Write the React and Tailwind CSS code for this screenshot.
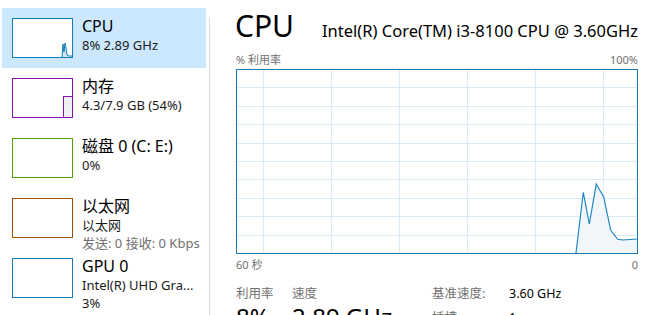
import React from "react";

const FONT = { fontFamily: '"Noto Sans", "Noto Sans CJK SC", sans-serif' };

function Thumb({ color, children }) {
  return (
    <div
      className="w-[61px] h-[40px] border shrink-0 bg-white relative overflow-hidden"
      style={{ borderColor: color }}
    >
      {children}
    </div>
  );
}

function Item({ selected, color, title, lines, thumb }) {
  return (
    <div
      className={
        "h-[60px] w-[204px] shrink-0 flex pl-[10px] pt-[10px] " +
        (selected ? "bg-[#cce8ff]" : "")
      }
    >
      <Thumb color={color}>{thumb}</Thumb>
      <div className="ml-[9px] flex flex-col -mt-[2px]">
        <div className="text-[16px] leading-[20px] text-[#000] whitespace-nowrap">{title}</div>
        {lines.map((l, i) => (
          <div
            key={i}
            className={
              "text-[13px] leading-[18px] whitespace-nowrap " +
              (l.gray ? "text-[#707070]" : "text-[#1a1a1a]")
            }
          >
            {l.text}
          </div>
        ))}
      </div>
    </div>
  );
}

function CpuThumb() {
  return (
    <svg width="59" height="38" className="absolute left-0 top-0">
      <polygon
        points="49,38 50,25 51,33 52,24 53,29 54,36 56,37 59,37 59,38"
        fill="#d6e6f2"
      />
      <polyline
        points="49,38 50,25 51,33 52,24 53,29 54,36 56,37 59,37"
        fill="none"
        stroke="#117dbb"
        strokeWidth="1"
      />
    </svg>
  );
}

function MemThumb() {
  return (
    <div className="absolute right-0 bottom-0 w-[9px] h-[21px] bg-[#f1eef3] border-l border-t border-[#8b12ae]" />
  );
}

function Chart() {
  const W = 402;
  const H = 185;
  const vx = [27, 95, 163, 231, 299, 367];
  const hy = [];
  for (let k = 1; k < 10; k++) hy.push(Math.round(k * 18.4) + 0.5);
  const pts = [
    [340, 184],
    [347.3, 123.3],
    [353.3, 155],
    [360.3, 115],
    [367.7, 128],
    [374.7, 161.3],
    [381.7, 170.3],
    [386.7, 171],
    [401, 170],
  ];
  const line = pts.map((p) => p.join(",")).join(" ");
  const poly = line + " 401,184";
  return (
    <svg width={W} height={H} className="block shrink-0">
      <rect x="0" y="0" width={W} height={H} fill="#ffffff" />
      {vx.map((x) => (
        <line key={"v" + x} x1={x + 0.5} y1="0" x2={x + 0.5} y2={H} stroke="#d9eaf4" strokeWidth="1" />
      ))}
      {hy.map((y) => (
        <line key={"h" + y} x1="0" y1={y} x2={W} y2={y} stroke="#d9eaf4" strokeWidth="1" />
      ))}
      <polygon points={poly} fill="#f1f6fa" />
      <polyline points={line} fill="none" stroke="#1f86c6" strokeWidth="1.2" />
      <rect x="0.5" y="0.5" width={W - 1} height={H - 1} fill="none" stroke="#1b78b8" strokeWidth="1" />
    </svg>
  );
}

export default function App() {
  return (
    <div className="w-[658px] h-[315px] overflow-hidden bg-white flex" style={FONT}>
      <div className="w-[209px] shrink-0 pt-[8px] pl-[2px] flex flex-col">
        <Item
          selected
          color="#117dbb"
          title="CPU"
          lines={[{ text: "8% 2.89 GHz" }]}
          thumb={<CpuThumb />}
        />
        <Item
          color="#8b12ae"
          title="内存"
          lines={[{ text: "4.3/7.9 GB (54%)" }]}
          thumb={<MemThumb />}
        />
        <Item color="#4da60c" title="磁盘 0 (C: E:)" lines={[{ text: "0%" }]} />
        <Item
          color="#a74f01"
          title="以太网"
          lines={[{ text: "以太网" }, { text: "发送: 0 接收: 0 Kbps", gray: true }]}
        />
        <Item
          color="#117dbb"
          title="GPU 0"
          lines={[{ text: "Intel(R) UHD Gra..." }, { text: "3%" }]}
        />
      </div>
      <div className="w-px bg-[#dadada] mt-[18px] shrink-0" />
      <div className="flex-1 pl-[26px] pr-[20px] flex flex-col">
        <div className="flex items-baseline justify-between pt-[8px] shrink-0">
          <div className="text-[30px] leading-[36px] text-black -ml-[1px]">CPU</div>
          <div className="text-[16.5px] leading-[22px] text-black whitespace-nowrap">
            Intel(R) Core(TM) i3-8100 CPU @ 3.60GHz
          </div>
        </div>
        <div className="flex justify-between text-[11px] leading-[14px] text-[#707070] mt-[9px] mb-[2px] shrink-0">
          <span>% 利用率</span>
          <span>100%</span>
        </div>
        <Chart />
        <div className="flex justify-between text-[11px] leading-[14px] text-[#707070] mt-[4px] shrink-0">
          <span>60 秒</span>
          <span>0</span>
        </div>
        <div className="flex mt-[13px] shrink-0">
          <div className="w-[56px] flex flex-col">
            <div className="text-[12.5px] leading-[18px] text-[#707070]">利用率</div>
            <div className="text-[24px] leading-[28px] text-black">8%</div>
          </div>
          <div className="w-[140px] flex flex-col">
            <div className="text-[12.5px] leading-[18px] text-[#707070]">速度</div>
            <div className="text-[24px] leading-[28px] text-black whitespace-nowrap">2.89 GHz</div>
          </div>
          <div className="grid grid-cols-[77px_auto] text-[12.5px] leading-[20px] -mt-[1px]">
            <div className="text-[#707070]">基准速度:</div>
            <div className="text-black">3.60 GHz</div>
            <div className="text-[#707070]">插槽:</div>
            <div className="text-black">1</div>
          </div>
        </div>
      </div>
    </div>
  );
}
